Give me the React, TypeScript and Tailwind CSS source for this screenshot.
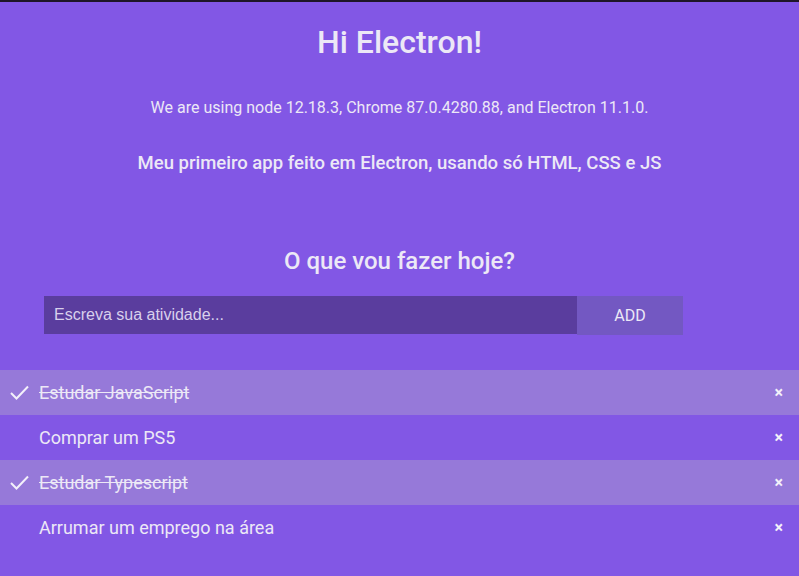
import React from "react";

const items = [
  { text: "Estudar JavaScript", done: true },
  { text: "Comprar um PS5", done: false },
  { text: "Estudar Typescript", done: true },
  { text: "Arrumar um emprego na área", done: false },
];

export default function App() {
  return (
    <div
      className="w-[799px] h-[576px] overflow-hidden bg-[#8257e5] text-[#ece8f6] border-t-2 border-[#1e1628]"
      style={{ fontFamily: "Roboto, 'Liberation Sans', sans-serif" }}
    >
      <h1 className="mt-[21px] text-center text-[32px] leading-[38px] font-medium">Hi Electron!</h1>
      <p className="mt-[37px] text-center text-[16px] leading-[20px]">
        We are using node 12.18.3, Chrome 87.0.4280.88, and Electron 11.1.0.
      </p>
      <p className="mt-[34px] text-center text-[18.5px] leading-[22px] font-medium">
        Meu primeiro app feito em Electron, usando só HTML, CSS e JS
      </p>
      <h2 className="mt-[73px] text-center text-[24px] leading-[28px] font-medium">O que vou fazer hoje?</h2>
      <div className="mt-[21px] ml-[44px] w-[639px] h-[39px] flex">
        <div
          className="w-[533px] h-[38px] bg-[#5a3d9e] flex items-center pl-[10px] text-[16px] text-[#d8d0ec]"
          style={{ fontFamily: "'Liberation Sans', Arial, sans-serif" }}
        >
          Escreva sua atividade...
        </div>
        <div className="w-[106px] h-[39px] bg-[#7358c2] flex items-center justify-center text-[16px] text-[#ece8f6]">
          ADD
        </div>
      </div>
      <ul className="mt-[35px]">
        {items.map((it) => (
          <li
            key={it.text}
            className={`h-[45px] flex items-center relative ${it.done ? "bg-[#9679d9]" : ""}`}
          >
            {it.done && (
              <svg className="absolute left-[10px] top-[15px]" width="19" height="15" viewBox="0 0 19 15">
                <path d="M1 8 L6.5 13.5 L18 1.5" fill="none" stroke="#f3f0fa" strokeWidth="2" />
              </svg>
            )}
            <span className={`ml-[39px] text-[18px] ${it.done ? "line-through" : ""}`}>{it.text}</span>
            <span className="ml-auto mr-[16px] text-[16px] font-bold text-[#f3f0fa]">×</span>
          </li>
        ))}
      </ul>
    </div>
  );
}
